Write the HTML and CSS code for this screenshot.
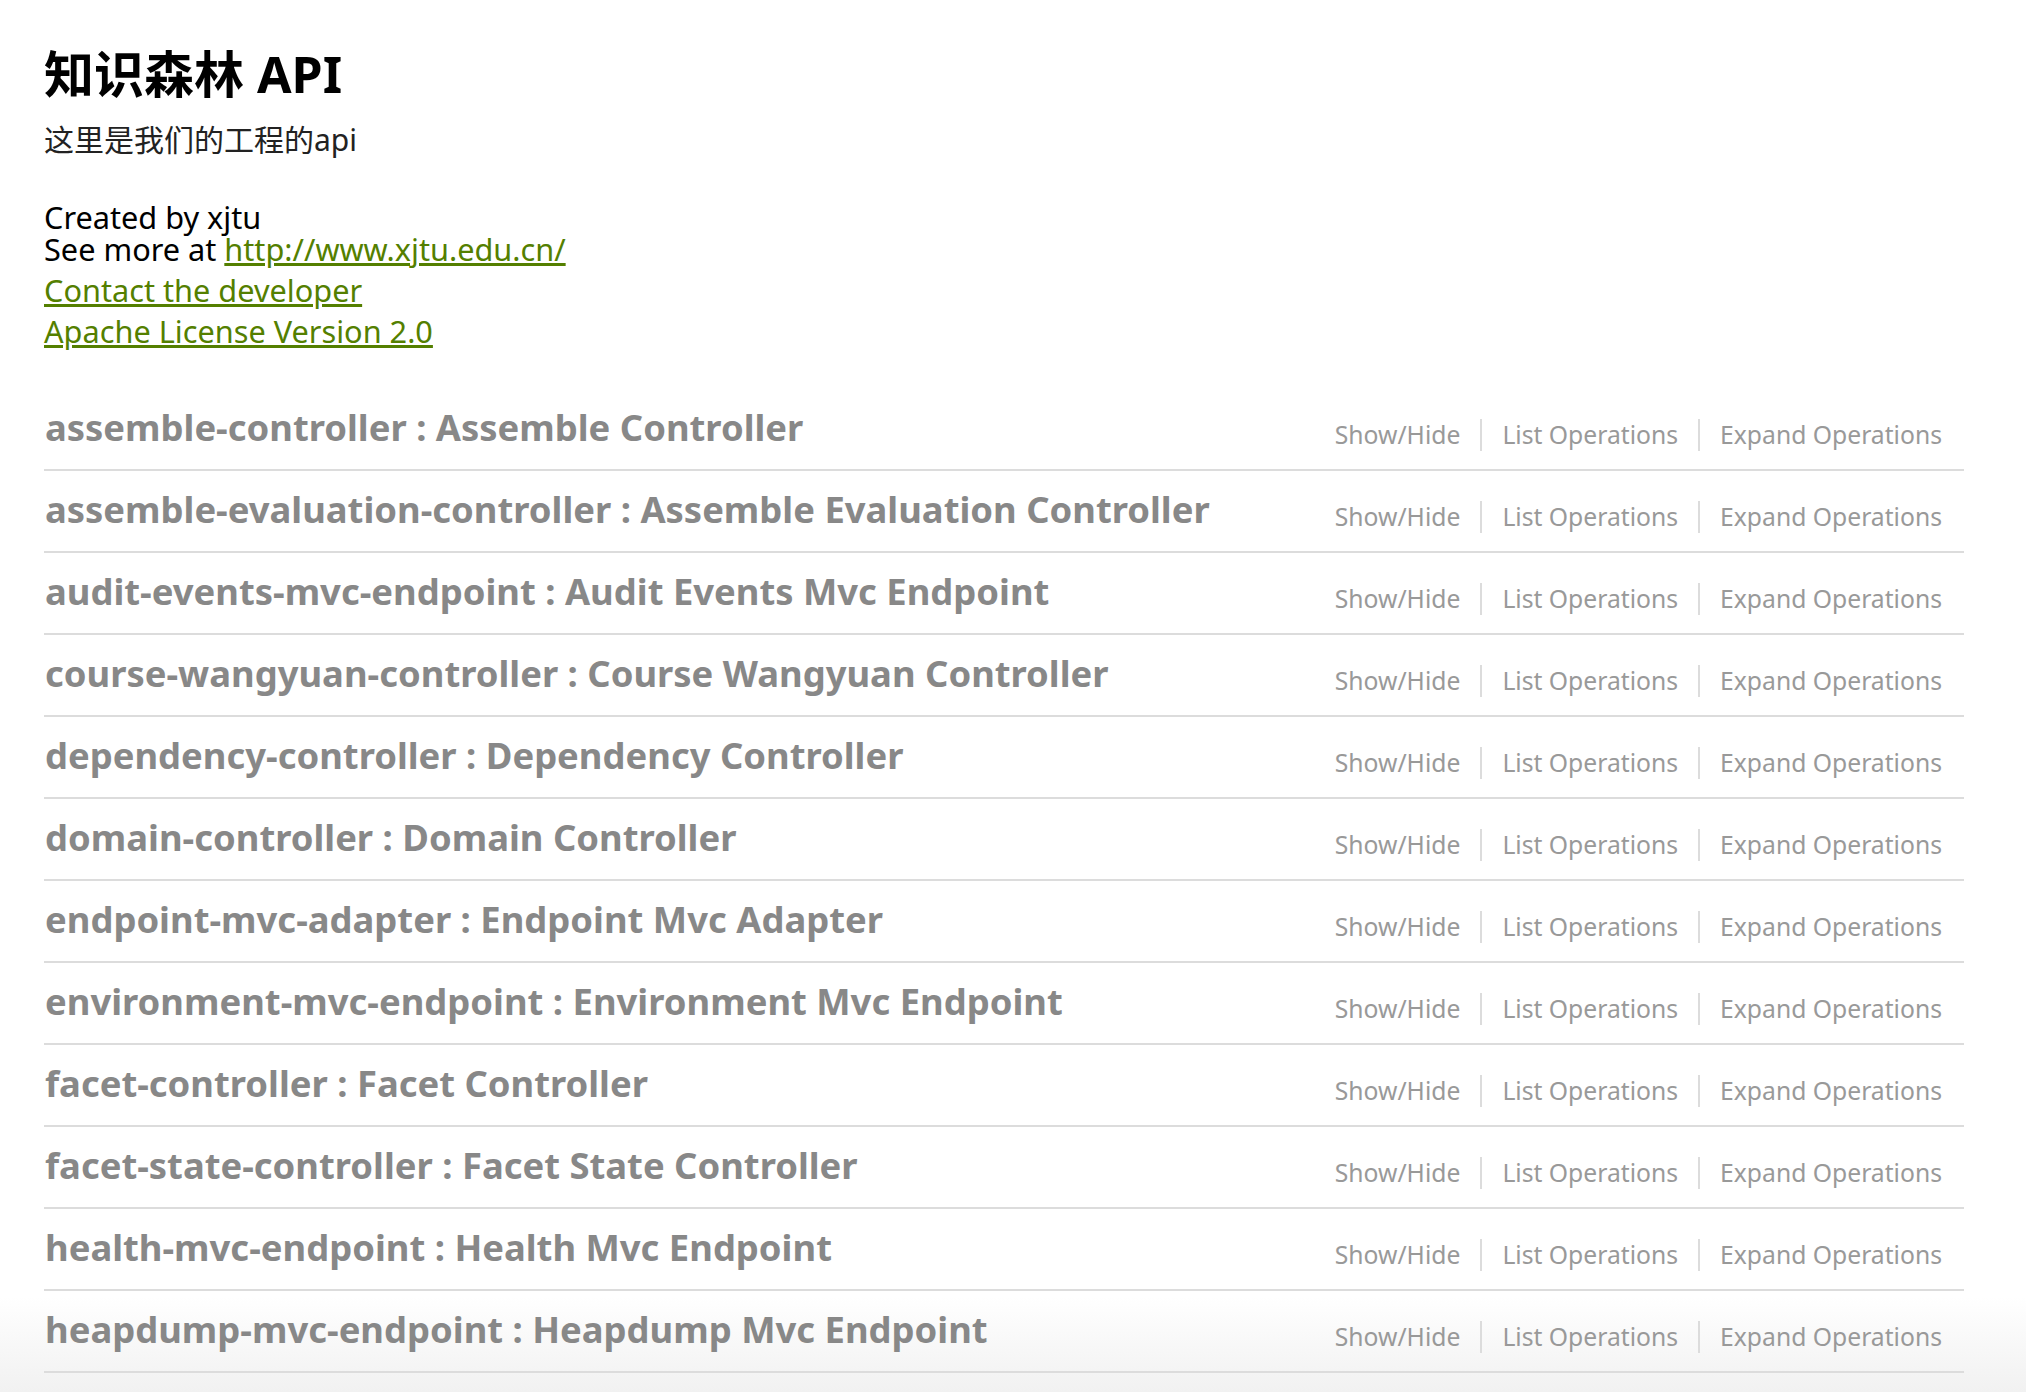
FILE: index.html
```html
<!DOCTYPE html>
<html lang="zh">
<head>
<meta charset="utf-8">
<title>知识森林 API</title>
<link rel="stylesheet" href="styles.css">
</head>
<body>
<div class="wrap">
  <div class="info">
    <div class="info-title">知识森林 API</div>
    <div class="info-desc">这里是我们的工程的api</div>
    <div class="info-line">Created by xjtu</div>
    <div class="info-line">See more at <a href="#">http://www.xjtu.edu.cn/</a></div>
    <div class="info-link first"><a href="#">Contact the developer</a></div>
    <div class="info-link"><a href="#">Apache License Version 2.0</a></div>
  </div>
  <ul class="resources">
    <li class="resource"><h2>assemble-controller : Assemble Controller</h2><ul class="options"><li>Show/Hide</li><li>List Operations</li><li>Expand Operations</li></ul></li>
    <li class="resource"><h2>assemble-evaluation-controller : Assemble Evaluation Controller</h2><ul class="options"><li>Show/Hide</li><li>List Operations</li><li>Expand Operations</li></ul></li>
    <li class="resource"><h2>audit-events-mvc-endpoint : Audit Events Mvc Endpoint</h2><ul class="options"><li>Show/Hide</li><li>List Operations</li><li>Expand Operations</li></ul></li>
    <li class="resource"><h2>course-wangyuan-controller : Course Wangyuan Controller</h2><ul class="options"><li>Show/Hide</li><li>List Operations</li><li>Expand Operations</li></ul></li>
    <li class="resource"><h2>dependency-controller : Dependency Controller</h2><ul class="options"><li>Show/Hide</li><li>List Operations</li><li>Expand Operations</li></ul></li>
    <li class="resource"><h2>domain-controller : Domain Controller</h2><ul class="options"><li>Show/Hide</li><li>List Operations</li><li>Expand Operations</li></ul></li>
    <li class="resource"><h2>endpoint-mvc-adapter : Endpoint Mvc Adapter</h2><ul class="options"><li>Show/Hide</li><li>List Operations</li><li>Expand Operations</li></ul></li>
    <li class="resource"><h2>environment-mvc-endpoint : Environment Mvc Endpoint</h2><ul class="options"><li>Show/Hide</li><li>List Operations</li><li>Expand Operations</li></ul></li>
    <li class="resource"><h2>facet-controller : Facet Controller</h2><ul class="options"><li>Show/Hide</li><li>List Operations</li><li>Expand Operations</li></ul></li>
    <li class="resource"><h2>facet-state-controller : Facet State Controller</h2><ul class="options"><li>Show/Hide</li><li>List Operations</li><li>Expand Operations</li></ul></li>
    <li class="resource"><h2>health-mvc-endpoint : Health Mvc Endpoint</h2><ul class="options"><li>Show/Hide</li><li>List Operations</li><li>Expand Operations</li></ul></li>
    <li class="resource"><h2>heapdump-mvc-endpoint : Heapdump Mvc Endpoint</h2><ul class="options"><li>Show/Hide</li><li>List Operations</li><li>Expand Operations</li></ul></li>
  </ul>
</div>
</body>
</html>
```
FILE: styles.css
```css
html {
  min-height: 100%;
  background: linear-gradient(to bottom, #ffffff calc(100% - 95px), #f1f1f1 100%);
}
body {
  margin: 0;
  font-family: "Noto Sans", "Noto Sans CJK SC", sans-serif;
  color: #000;
}
.wrap {
  margin-left: 44px;
  width: 1920px;
}
.info {
  padding-top: 49px;
}
.info-title {
  font-size: 50px;
  font-weight: bold;
  line-height: 50px;
  margin-bottom: 26px;
}
.info-desc {
  font-size: 30px;
  line-height: 30px;
  color: #222;
  margin-bottom: 46px;
}
.info-line {
  font-size: 30.7px;
  line-height: 32px;
}
.info-link {
  font-size: 30.7px;
  line-height: 41px;
}
.info-link.first {
  margin-top: 5px;
}
a {
  color: #547f00;
  text-decoration: underline;
}
.resources {
  list-style: none;
  margin: 37px 0 0;
  padding: 0;
}
.resource {
  display: flex;
  justify-content: space-between;
  align-items: flex-start;
  height: 80px;
  border-bottom: 2px solid #dcdcdc;
}
.resource h2 {
  margin: 20px 0 0 1px;
  font-size: 36.4px;
  line-height: 36px;
  font-weight: bold;
  color: #888;
}
.options {
  list-style: none;
  display: flex;
  margin: 30px 22px 0 0;
  padding: 0;
}
.options li {
  font-size: 24.7px;
  line-height: 24px;
  padding: 4px 20px;
  color: #999;
  border-right: 2px solid #dcdcdc;
}
.options li:last-child {
  border-right: none;
  padding-right: 0;
}
```
